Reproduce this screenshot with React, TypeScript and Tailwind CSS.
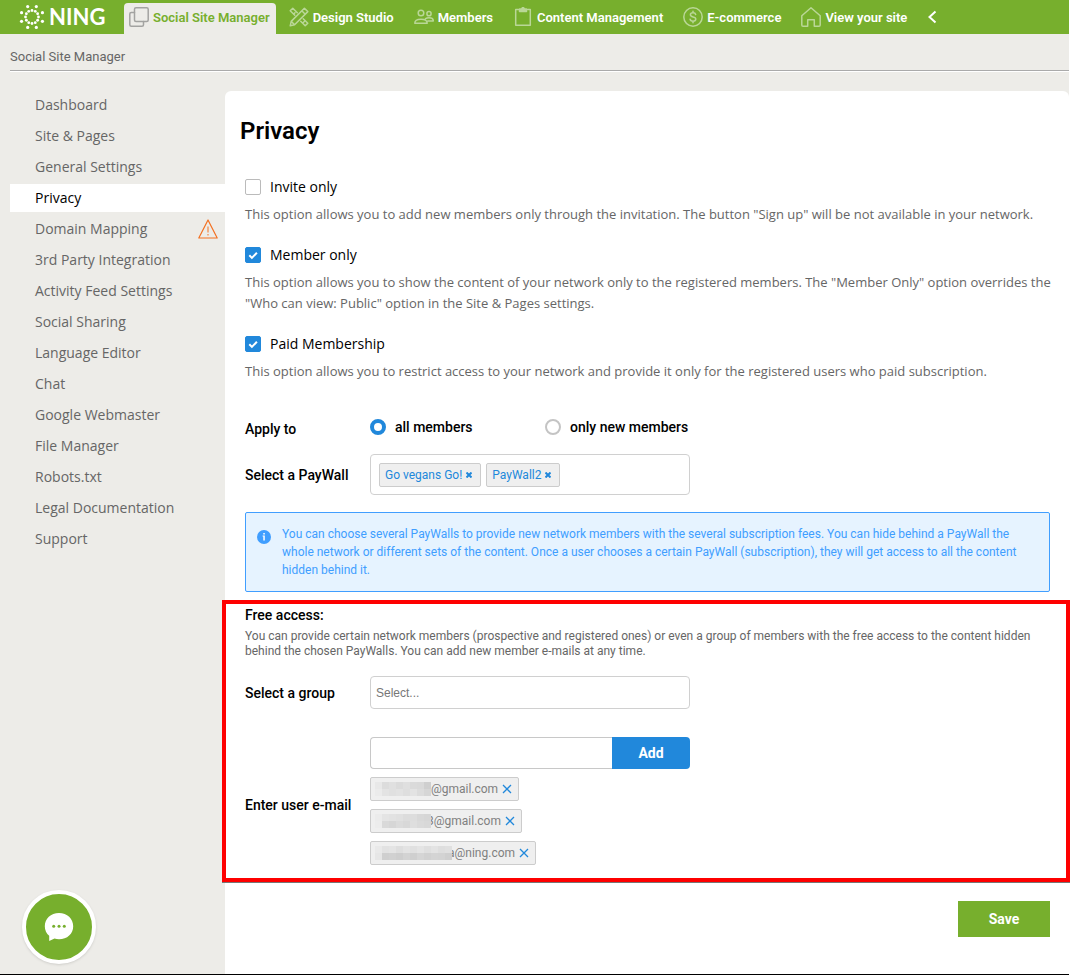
import { useState } from "react";
import type { ReactNode } from "react";

type TNavItem = { name: string; icon: ReactNode };

const line = {
  viewBox: "0 0 20 20",
  fill: "none",
  stroke: "currentColor",
  strokeWidth: 1.5,
  strokeLinecap: "round",
  strokeLinejoin: "round",
} as const;

const navItems: TNavItem[] = [
  {
    name: "Design Studio",
    icon: (
      <svg {...line} className="size-5">
        <path d="M8.300 5.800 3.800 1.200 1.200 3.800l4.600 4.500M4.600 7.100l1.400-1.400M11.700 14.200l4.500 4.600 2.600-2.600-4.600-4.500M14 15.800l1.600-1.600" />
        <path d="M15.400 1.200 2.200 14.400l-1 4.400 4.400-1L18.800 4.600l-3.400-3.400ZM12.800 3.800l3.400 3.400M2.200 14.400l3.400 3.400" />
      </svg>
    ),
  },
  {
    name: "Members",
    icon: (
      <svg {...line} className="size-5">
        <circle cx="7" cy="6" r="2.800" />
        <circle cx="15" cy="6.700" r="2.100" />
        <path d="M.8 16.200c0-2.800 2.400-4 6.200-4s6.200 1.200 6.200 4H.8ZM11.500 11.600c1-.6 2.100-.8 3.500-.8 2.700 0 4.300.9 4.300 3.200h-5.500" />
      </svg>
    ),
  },
  {
    name: "Content Management",
    icon: (
      <svg {...line} className="size-5">
        <path d="M5.500 2.500H2.700v15.800h14.600V2.500h-2.800" />
        <path d="M6.500 2h2.200C8.900.9 9.300.6 10 .6s1.100.3 1.300 1.400h2.200v2.600h-7V2Z" fill="currentColor" />
      </svg>
    ),
  },
  {
    name: "E-commerce",
    icon: (
      <svg {...line} className="size-5">
        <circle cx="10" cy="10" r="9.200" />
        <path d="M12.700 7.500c-.3-1.200-1.300-1.700-2.700-1.700-1.500 0-2.600.7-2.600 2 0 3 5.400 1.300 5.400 4.300 0 1.400-1.200 2.100-2.800 2.100s-2.700-.7-2.900-2M10 4.200v1.500M10 14.300v1.500" />
      </svg>
    ),
  },
  {
    name: "View your site",
    icon: (
      <svg {...line} className="size-5">
        <path d="M.8 8.800 10 .8l9.200 8v9.100c0 .8-.4 1.300-1.200 1.300h-4.700v-6.400H6.700v6.400H2c-.8 0-1.200-.5-1.200-1.300V8.800Z" />
      </svg>
    ),
  },
];

const menu = [
  "Dashboard",
  "Site & Pages",
  "General Settings",
  "Privacy",
  "Domain Mapping",
  "3rd Party Integration",
  "Activity Feed Settings",
  "Social Sharing",
  "Language Editor",
  "Chat",
  "Google Webmaster",
  "File Manager",
  "Robots.txt",
  "Legal Documentation",
  "Support",
];

const innerDots = Array.from({ length: 12 }, (_, i) => (i * Math.PI) / 6);
const outerDots = Array.from({ length: 8 }, (_, i) => ((i + 0.5) * Math.PI) / 4);

const Logo: React.FC = () => (
  <a href="#" className="flex w-[105px] items-center gap-1 text-white">
    <svg viewBox="-13 -13 26 26" className="size-[26px]" fill="currentColor">
      {innerDots.map((a) => (
        <circle key={a} cx={6.5 * Math.cos(a)} cy={6.5 * Math.sin(a)} r="1.400" />
      ))}
      {outerDots.map((a) => (
        <circle key={a} cx={11.3 * Math.cos(a)} cy={11.3 * Math.sin(a)} r="1.600" />
      ))}
    </svg>
    <span className="font-['Lato',sans-serif] text-[22px] leading-none font-bold">NING</span>
  </a>
);

const Header: React.FC = () => (
  <header className="flex h-[34px] items-center bg-[#77af2d] pl-[19px] text-[13px] font-semibold whitespace-nowrap">
    <Logo />
    <a
      href="#"
      className="flex h-[31px] items-center gap-1 self-end rounded-t bg-[#edece8] pr-[6px] pb-[3px] pl-[5px] text-[#77af2d]"
    >
      <svg {...line} className="size-5 text-[#a3a3a1]">
        <rect x="5.500" y=".8" width="13.700" height="13.700" rx="1.500" />
        <path d="M5.500 5.500H2.300c-.9 0-1.500.6-1.500 1.500v10.700c0 .9.6 1.500 1.500 1.500H13c.9 0 1.500-.6 1.500-1.500v-3.200" />
      </svg>
      <span className="pt-[2px]">Social Site Manager</span>
    </a>
    <nav className="ml-[13px] flex items-center gap-5 text-white">
      {navItems.map((item) => (
        <a key={item.name} href="#" className="flex items-center gap-1">
          <span className="text-[#bad797]">{item.icon}</span>
          <span className="pt-[2px]">{item.name}</span>
        </a>
      ))}
    </nav>
    <button type="button" aria-label="Collapse" className="ml-5 text-white">
      <svg viewBox="0 0 10 14" className="h-[14px] w-[10px]" fill="none" stroke="currentColor" strokeWidth="2">
        <path d="M8.500 1.500 2.500 7l6 5.500" />
      </svg>
    </button>
  </header>
);

const Sidebar: React.FC = () => (
  <aside className="flex w-[225px] shrink-0 flex-col pl-[10px]">
    <nav className="flex flex-col gap-[3px] font-['Open_Sans',sans-serif] text-sm">
      {menu.map((name) => (
        <a
          key={name}
          href="#"
          className={`flex h-7 items-center justify-between pr-[7px] pl-[25px] ${
            name === "Privacy" ? "bg-white text-black" : "text-[#666]"
          }`}
        >
          {name}
          {name === "Domain Mapping" && (
            <svg viewBox="0 0 20 20" className="size-5 text-[#f37021]" fill="none" stroke="currentColor">
              <path d="M10 1 .8 19h18.400L10 1Z" strokeWidth="1.200" strokeLinejoin="round" />
              <path d="M10 7.500v6M10 15v1.500" />
            </svg>
          )}
        </a>
      ))}
    </nav>
    <button
      type="button"
      aria-label="Open chat"
      className="mt-auto mb-[10px] ml-3 flex size-[74px] items-center justify-center rounded-full border-4 border-white bg-[#77af2d] shadow"
    >
      <svg viewBox="0 0 30 30" className="size-[30px]">
        <path
          d="M15 1C6.800 1 .8 6.700.8 14.200c0 4 1.700 7.200 4.400 9.600V29l5.300-2.400c1.400.5 2.900.7 4.500.7 8.200 0 14.200-5.600 14.200-13.100S23.200 1 15 1Z"
          fill="#fff"
        />
        <g fill="#77af2d">
          <circle cx="9.700" cy="14.200" r="1.500" />
          <circle cx="15" cy="14.200" r="1.500" />
          <circle cx="20.300" cy="14.200" r="1.500" />
        </g>
      </svg>
    </button>
  </aside>
);

type TOptionParam = {
  id: string;
  label: string;
  checked?: boolean;
  children: ReactNode;
};

const Option: React.FC<TOptionParam> = (param) => (
  <div className="font-['Open_Sans',sans-serif]">
    <div className="flex h-5 items-center gap-[9px]">
      <span className="relative size-4">
        <input
          id={param.id}
          type="checkbox"
          defaultChecked={param.checked}
          className="peer block size-4 appearance-none rounded-xs border border-[#bbb] bg-white checked:border-[#2188db] checked:bg-[#2188db]"
        />
        <svg
          viewBox="0 0 16 16"
          className="pointer-events-none absolute inset-0 hidden size-4 peer-checked:block"
          fill="none"
          stroke="#fff"
          strokeWidth="2"
        >
          <path d="m4.300 8.300 2.600 2.600 5-5.200" />
        </svg>
      </span>
      <label htmlFor={param.id} className="text-sm text-black">
        {param.label}
      </label>
    </div>
    <p className="mt-[7px] text-[13px] leading-[21px] text-[#666]">{param.children}</p>
  </div>
);

const Radio: React.FC<{ label: string; checked?: boolean }> = ({ label, checked }) => (
  <label className="flex w-[175px] items-center gap-[9px] whitespace-nowrap">
    <input
      type="radio"
      name="apply"
      defaultChecked={checked}
      className="size-4 appearance-none rounded-full border-2 border-[#c4c4c4] bg-white checked:border-4 checked:border-[#2188db]"
    />
    {label}
  </label>
);

const Tag: React.FC<{ name: string }> = ({ name }) => (
  <span className="flex h-6 items-center gap-1 rounded-xs border border-[#ccc] bg-[#efefef] pr-2 pl-[5px] text-xs text-[#2188db]">
    {name}
    <button type="button" aria-label={`Remove ${name}`}>
      <svg viewBox="0 0 6 6" className="size-[6px]" stroke="currentColor" strokeWidth="2">
        <path d="m.5.500 5 5M5.500.500l-5 5" />
      </svg>
    </button>
  </span>
);

type TEmail = { text: string; shades: string[][] };

// hidden part of every address, drawn as rows of shaded cells
const emails: TEmail[] = [
  {
    text: "t@gmail.com",
    shades: [
      ["#e8e8e8", "#dcdcdc", "#e0e0e0", "#dbdbdb", "#dfdfdf", "#dadada", "#d9d9d9", "#cfcfcf"],
      ["#ebebeb", "#e3e3e3", "#e0e0e0", "#e2e2e2", "#dedede", "#e3e3e3", "#dcdcdc", "#d6d6d6"],
    ],
  },
  {
    text: "3@gmail.com",
    shades: [
      ["#ebebeb", "#e4e4e4", "#e2e2e2", "#e0e0e0", "#dcdcdc", "#dddddd", "#d8d8d8", "#d6d6d6"],
      ["#ececec", "#d9d9d9", "#d6d6d6", "#dbdbdb", "#d8d8d8", "#dedede", "#dadada", "#d8d8d8"],
    ],
  },
  {
    text: "a@ning.com",
    shades: [
      ["#e9e9e9", "#e2e2e2", "#e4e4e4", "#dedede", "#e3e3e3", "#e0e0e0", "#e4e4e4", "#dfdfdf", "#e3e3e3", "#dedede", "#e0e0e0"],
      ["#e6e6e6", "#cfcfcf", "#d1d1d1", "#cecece", "#d3d3d3", "#cfcfcf", "#d5d5d5", "#d1d1d1", "#d4d4d4", "#d3d3d3", "#cfcfcf"],
    ],
  },
];

const EmailChip: React.FC<{ email: TEmail }> = ({ email }) => (
  <li className="flex h-6 items-center rounded-xs border border-[#ccc] bg-[#efefef] px-1 text-xs text-[#808080]">
    <svg
      viewBox={`0 0 ${email.shades[0].length * 7} 14`}
      className="relative mr-[-4px] h-[14px] bg-[#efefef]"
      shapeRendering="crispEdges"
    >
      {email.shades.map((row, y) =>
        row.map((shade, x) => (
          <rect key={`${x}-${y}`} x={x * 7} y={y * 7} width="7" height="7" fill={shade} />
        ))
      )}
    </svg>
    {email.text}
    <button type="button" aria-label="Remove e-mail" className="mr-[2px] ml-1 text-[#2188db]">
      <svg viewBox="0 0 10 10" className="size-[10px]" stroke="currentColor" strokeWidth="1.300">
        <path d="m1 1 8 8M9 1 1 9" />
      </svg>
    </button>
  </li>
);

export default function App() {
  const [mail, setMail] = useState("");

  return (
    <div className="bg-white pr-[6px] font-['Roboto',sans-serif] text-[#666]">
      <div className="flex min-h-screen flex-col border-b border-black bg-[#edece8]">
        <Header />
        <div className="ml-[10px] flex h-[37px] items-center border-b border-[#aaa] pt-[10px] text-[13px] shadow-[0_1px_0_#fff]">
          Social Site Manager
        </div>
        <div className="mt-5 flex grow">
          <Sidebar />
          <main className="min-w-0 grow rounded-t-md bg-white pt-6 text-sm">
            <h1 className="pl-[15px] text-2xl font-semibold text-black">Privacy</h1>
            <div className="mt-[30px] pr-[19px] pl-5">
              <div className="-mr-3 flex flex-col gap-5">
                <Option id="invite" label="Invite only">
                  This option allows you to add new members only through the invitation. The button "Sign up" will be
                  not available in your network.
                </Option>
                <Option id="member" label="Member only" checked>
                  This option allows you to show the content of your network only to the registered members. The
                  "Member Only" option overrides the "Who can view: Public" option in the Site &amp; Pages settings.
                </Option>
                <Option id="paid" label="Paid Membership" checked>
                  This option allows you to restrict access to your network and provide it only for the registered
                  users who paid subscription.
                </Option>
              </div>
              <div className="mt-[33px] flex h-6 items-center font-medium text-black">
                <span className="w-[125px] pt-1">Apply to</span>
                <Radio label="all members" checked />
                <Radio label="only new members" />
              </div>
              <div className="mt-[15px] flex items-center font-medium text-black">
                <label htmlFor="paywall" className="w-[125px]">
                  Select a PayWall
                </label>
                <div className="flex h-[41px] w-[320px] items-center gap-[5px] rounded border border-[#d0d0d0] px-2 font-normal">
                  <Tag name="Go vegans Go!" />
                  <Tag name="PayWall2" />
                  <input id="paywall" type="text" className="h-6 w-0 min-w-0 grow outline-none" />
                </div>
              </div>
              <div className="mt-[17px] flex gap-[11px] rounded-xs border border-[#409eff] bg-[#e6f3ff] px-[11px] py-3 text-xs leading-[18px] text-[#409eff]">
                <svg viewBox="0 0 14 14" className="mt-[5px] size-[14px] shrink-0">
                  <circle cx="7" cy="7" r="7" fill="#409eff" />
                  <path d="M6.300 3h1.500v1.500H6.300zM5.600 5.500h2.200v5H6.300v-4h-.7z" fill="#fff" />
                </svg>
                <p>
                  You can choose several PayWalls to provide new network members with the several subscription fees.
                  You can hide behind a PayWall the whole network or different sets of the content. Once a user chooses
                  a certain PayWall (subscription), they will get access to all the content hidden behind it.
                </p>
              </div>
            </div>

            <section className="mt-2 mr-[-1px] ml-[-3px] border-4 border-[#fe0000] pt-px pr-4 pb-[13px] pl-[19px] shadow-[0_1px_0_#777]">
              <h2 className="font-medium text-black">Free access:</h2>
              <p className="mt-1 text-xs leading-[15px]">
                You can provide certain network members (prospective and registered ones) or even a group of members
                with the free access to the content hidden behind the chosen PayWalls. You can add new member e-mails
                at any time.
              </p>
              <div className="mt-[17px] flex items-center">
                <label htmlFor="group" className="w-[125px] font-medium text-black">
                  Select a group
                </label>
                <input
                  id="group"
                  type="text"
                  placeholder="Select..."
                  className="h-[33px] w-[320px] rounded border border-[#d0d0d0] px-[5px] font-['Liberation_Sans',sans-serif] text-xs placeholder:text-[#777]"
                />
              </div>
              <div className="mt-7 flex items-center">
                <label htmlFor="email" className="w-[125px] pt-2 font-medium text-black">
                  Enter user e-mail
                </label>
                <div>
                  <div className="flex h-8 w-[320px]">
                    <input
                      id="email"
                      type="email"
                      value={mail}
                      onChange={(e) => setMail(e.target.value)}
                      className="min-w-0 grow rounded-l border border-r-0 border-[#c8c8c8] px-2"
                    />
                    <button type="button" className="w-[78px] rounded-r bg-[#2188db] font-bold text-white">
                      Add
                    </button>
                  </div>
                  <ul className="mt-2 flex flex-col items-start gap-2">
                    {emails.map((email) => (
                      <EmailChip key={email.text} email={email} />
                    ))}
                  </ul>
                </div>
              </div>
            </section>

            <div className="flex justify-end pt-[19px] pr-[19px] pb-9">
              <button type="button" className="h-9 w-[92px] bg-[#77af2d] font-bold text-white">
                Save
              </button>
            </div>
          </main>
        </div>
      </div>
    </div>
  );
}
